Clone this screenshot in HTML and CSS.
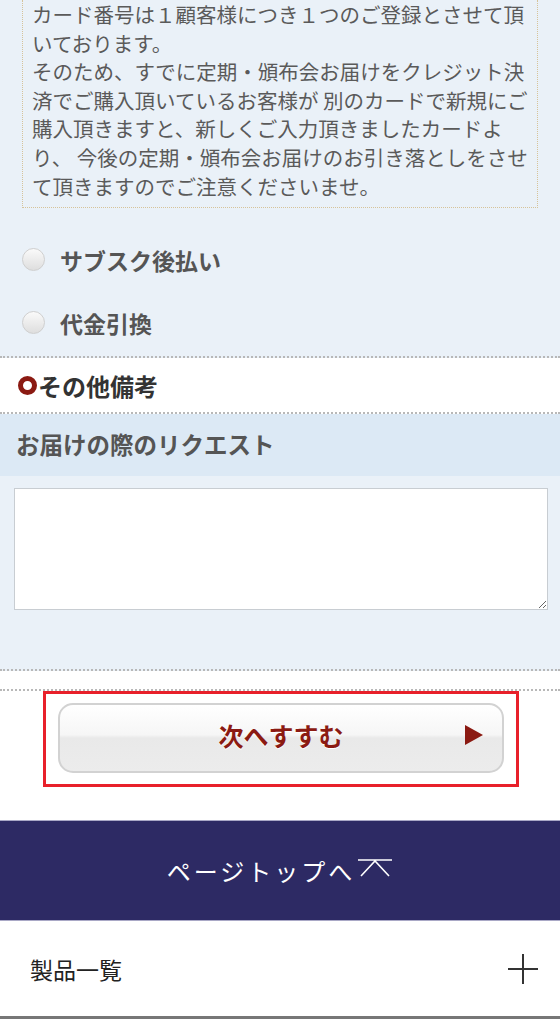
FILE: index.html
```html
<!DOCTYPE html>
<html lang="ja">
<head>
    <meta charset="UTF-8">
    <meta name="viewport" content="width=device-width, initial-scale=1.0">
    <title>ご注文手続き</title>
    <link rel="stylesheet" href="styles.css">
</head>
<body>
    <div class="payment">
        <div class="notice">
            カード番号は１顧客様につき１つのご登録とさせて頂いております。<br>
            そのため、すでに定期・頒布会お届けをクレジット決済でご購入頂いているお客様が 別のカードで新規にご購入頂きますと、新しくご入力頂きましたカードより、 今後の定期・頒布会お届けのお引き落としをさせて頂きますのでご注意くださいませ。
        </div>

        <label class="pay-option">
            <input type="radio" name="payment" value="subsc">
            <span>サブスク後払い</span>
        </label>
        <label class="pay-option">
            <input type="radio" name="payment" value="cod">
            <span>代金引換</span>
        </label>
    </div>

    <h2 class="section-title"><span class="ring"></span>その他備考</h2>

    <div class="request">
        <h3 class="request-head">お届けの際のリクエスト</h3>
        <div class="request-body">
            <textarea name="request" class="request-text"></textarea>
        </div>
    </div>

    <div class="spacer"></div>

    <div class="next-wrap">
        <button type="button" class="next-btn">
            次へすすむ
            <span class="next-arrow"></span>
        </button>
    </div>

    <a href="#" class="pagetop">
        ページトップへ
        <svg width="36" height="20" viewBox="0 0 36 20">
            <path d="M1 2 H35 M4 18 L18 3 L32 18" fill="none" stroke="#fff" stroke-width="1.6"/>
        </svg>
    </a>

    <div class="menu-row">
        <span>製品一覧</span>
        <svg width="32" height="32" viewBox="0 0 32 32">
            <path d="M16 1 V31 M1 16 H31" fill="none" stroke="#333" stroke-width="2"/>
        </svg>
    </div>
</body>
</html>
```

FILE: styles.css
```css
body {
    margin: 0;
    font-family: "Noto Sans CJK JP", "Noto Sans", sans-serif;
    background-color: #ffffff;
    color: #555;
}
.payment {
    background-color: #eaf1f8;
    padding: 0 0 2px;
    border-bottom: 2px dotted #b8b8b8;
}
.notice {
    margin: 0 22px;
    padding: 0 4px 7px 9px;
    border: 1px dotted #d6c39a;
    border-top: none;
    font-size: 20.5px;
    line-height: 28.6px;
    color: #5a5a5a;
}
.pay-option {
    display: flex;
    align-items: center;
    height: 63px;
    padding-left: 22px;
    font-size: 23px;
    font-weight: 700;
    color: #555;
}
.pay-option:first-of-type {
    margin-top: 20px;
}
.pay-option input {
    appearance: none;
    -webkit-appearance: none;
    width: 23px;
    height: 23px;
    margin: 0 15px 0 0;
    border: 1px solid #cfcfcf;
    border-radius: 50%;
    background: linear-gradient(#fafafa, #dedede);
}
.section-title {
    display: flex;
    align-items: center;
    margin: 0;
    height: 54px;
    padding-left: 18px;
    font-size: 24px;
    font-weight: 700;
    color: #333;
    border-bottom: 2px dotted #b8b8b8;
}
.ring {
    width: 9px;
    height: 9px;
    border: 5px solid #8b1a12;
    border-radius: 50%;
    margin-right: 1px;
}
.request {
    background-color: #eaf1f8;
    border-bottom: 2px dotted #b8b8b8;
}
.request-head {
    margin: 0;
    height: 62px;
    line-height: 60px;
    padding-left: 16px;
    background-color: #dce9f5;
    font-size: 23.5px;
    font-weight: 700;
    color: #555;
}
.request-body {
    padding: 12px 12px 59px 14px;
}
.request-text {
    display: block;
    box-sizing: border-box;
    width: 100%;
    height: 122px;
    border: 1px solid #c8cdd2;
    background: #fff;
}
.spacer {
    height: 18px;
    border-bottom: 2px dotted #b8b8b8;
}
.next-wrap {
    box-sizing: border-box;
    width: 476px;
    height: 96px;
    margin: 0 0 33px 43px;
    padding: 9px 12px 11px;
    border: 3px solid #e8202a;
}
.next-btn {
    position: relative;
    display: block;
    width: 100%;
    height: 100%;
    padding: 0 0 6px;
    border: 2px solid #d2d2d2;
    border-radius: 15px;
    background: linear-gradient(#ffffff 0%, #f6f6f6 45%, #e9e9e9 50%, #ececec 100%);
    font-family: inherit;
    font-size: 25px;
    font-weight: 700;
    color: #8b1a12;
    text-shadow: 0 1px 0 #fff;
    cursor: pointer;
}
.next-arrow {
    position: absolute;
    right: 19px;
    top: 20px;
    width: 0;
    height: 0;
    border-top: 10px solid transparent;
    border-bottom: 10px solid transparent;
    border-left: 18px solid #8b1a12;
}
.pagetop {
    display: flex;
    align-items: center;
    justify-content: center;
    gap: 2px;
    height: 99px;
    background-color: #2d2a64;
    border-top: 1px solid #a9a8c6;
    border-bottom: 1px solid #a9a8c6;
    color: #fff;
    font-size: 24px;
    letter-spacing: 3px;
    text-decoration: none;
}
.pagetop svg {
    margin-top: -6px;
}
.menu-row {
    display: flex;
    align-items: center;
    justify-content: space-between;
    height: 95px;
    padding: 0 21px 0 30px;
    border-bottom: 3px solid #777;
    font-size: 23px;
    color: #222;
}
```
